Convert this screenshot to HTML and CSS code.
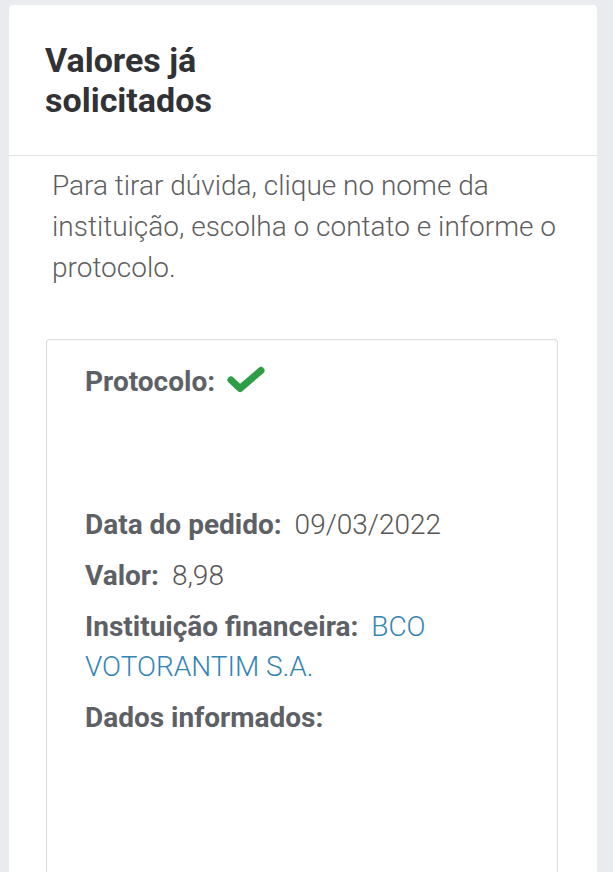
FILE: index.html
```html
<!DOCTYPE html>
<html>

<head>
    <meta name="viewport" content="width=device-width, initial-scale=1.0">
    <link rel="stylesheet" href="styles.css">
</head>

<body>
    <div class="panel">
        <div class="panel-header">
            <h2>Valores já<br>solicitados</h2>
        </div>

        <div class="panel-body">
            <p class="hint">Para tirar dúvida, clique no nome da instituição, escolha o contato e informe o protocolo.</p>

            <div class="request-card">
                <div class="row">
                    <span class="label">Protocolo:</span>
                    <svg class="check" viewBox="0 0 40 28" width="40" height="28">
                        <path d="M5 14 L14 22.5 L35 4.5" fill="none" stroke="#2e9e46" stroke-width="7" stroke-linecap="round" stroke-linejoin="round" />
                    </svg>
                </div>
                <div class="blank"></div>
                <div class="row"><span class="label">Data do pedido:</span> <span class="value">09/03/2022</span></div>
                <div class="row"><span class="label">Valor:</span> <span class="value">8,98</span></div>
                <div class="row"><span class="label">Instituição financeira:</span> <a class="bank" href="#">BCO VOTORANTIM S.A.</a></div>
                <div class="row"><span class="label">Dados informados:</span></div>
            </div>
        </div>
    </div>
</body>

</html>
```

FILE: styles.css
```css
* {
    box-sizing: border-box;
}

body {
    margin: 0;
    padding: 5px 16px 0 9px;
    background-color: #e9ebee;
    font-family: Roboto, 'Liberation Sans', sans-serif;
    height: 872px;
    overflow: hidden;
}

.panel {
    background: white;
    border-radius: 4px 4px 0 0;
}

.panel-header {
    padding: 35px 36px 35px;
    border-bottom: 1px solid #e2e2e2;
}

.panel-header h2 {
    margin: 0;
    font-size: 34px;
    font-weight: 700;
    line-height: 40px;
    color: #303236;
}

.panel-body {
    padding: 9px 39px 0 37px;
}

.hint {
    margin: 0 0 51px;
    padding-left: 6px;
    font-size: 28px;
    font-weight: 300;
    line-height: 41px;
    color: #5e5e5e;
}

.request-card {
    border: 1px solid #dcdcdc;
    border-bottom: none;
    border-radius: 4px 4px 0 0;
    padding: 22px 30px 0 38px;
    height: 533px;
    display: flex;
    flex-direction: column;
    gap: 11px;
}

.row {
    font-size: 28px;
    line-height: 40px;
}

.label {
    font-weight: 700;
    color: #5d6166;
}

.value {
    font-weight: 300;
    color: #555;
    margin-left: 6px;
}

.check {
    vertical-align: -3px;
    margin-left: 4px;
}

.blank {
    height: 81px;
}

.bank {
    font-weight: 300;
    color: #3484b4;
    text-decoration: none;
    margin-left: 6px;
}
```
